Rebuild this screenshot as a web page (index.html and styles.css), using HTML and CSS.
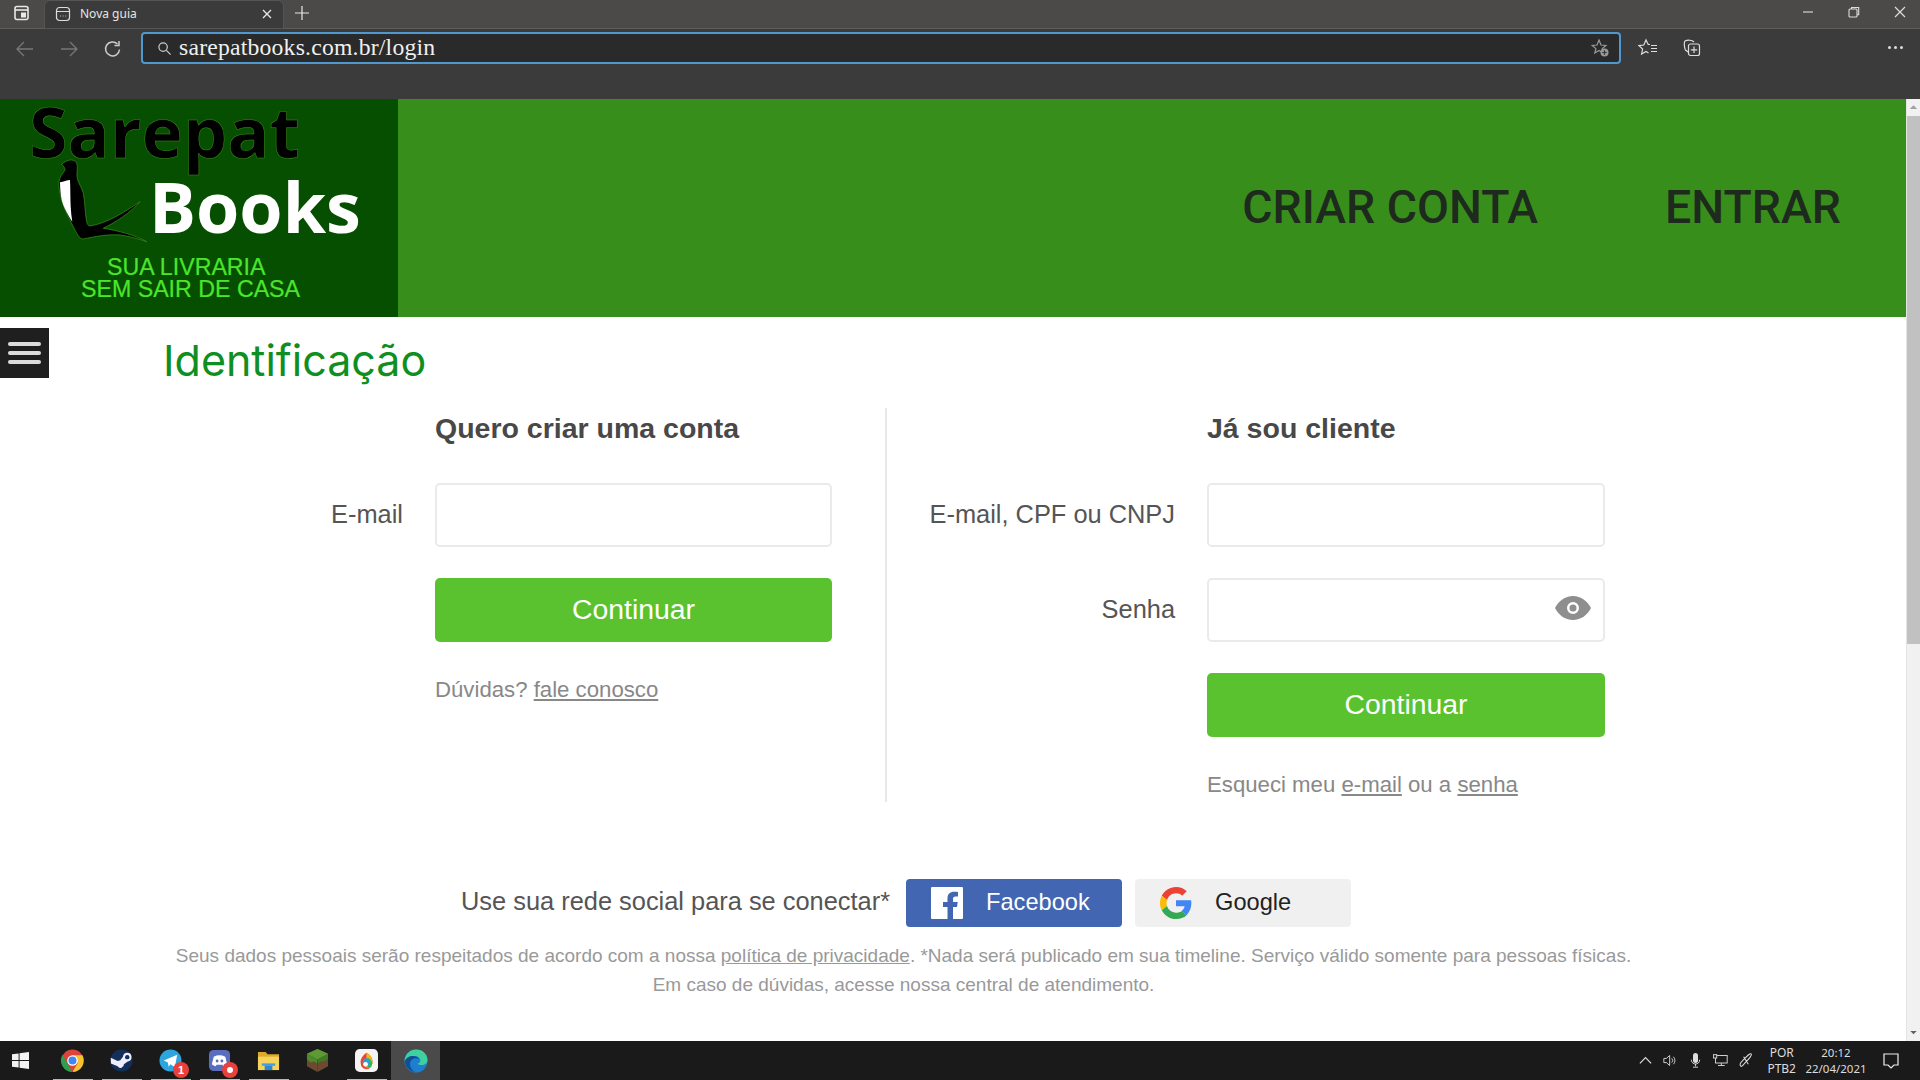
FILE: index.html
```html
<!DOCTYPE html>
<html lang="pt-BR">
<head>
<meta charset="utf-8">
<title>Sarepat Books</title>
<link rel="stylesheet" href="styles.css">
</head>
<body>
<div class="browser">
  <div class="tabstrip">
    <div class="tab-actions">
      <svg class="ic18" viewBox="0 0 18 18" fill="none" stroke="#e8e8e8" stroke-width="1.6"><rect x="2" y="2.500" width="13" height="13" rx="2"/><path d="M2 6h13"/><rect x="8" y="8.500" width="5" height="5" fill="#e8e8e8" stroke="none"/></svg>
    </div>
    <div class="tab">
      <svg class="ic18" viewBox="0 0 18 18" fill="none" stroke="#ddd" stroke-width="1.200"><rect x="2.500" y="2.500" width="13" height="13" rx="3"/><path d="M2.500 6.500h13M6 11h.8M8.700 11h.8M11.400 11h.8"/></svg>
      <span class="tab-title">Nova guia</span>
      <svg class="tab-x" viewBox="0 0 12 12" stroke="#e8e8e8" stroke-width="1.300"><path d="M2 2l8 8M10 2l-8 8"/></svg>
    </div>
    <svg class="tab-new" viewBox="0 0 16 16" stroke="#e8e8e8" stroke-width="1.200"><path d="M8 1v14M1 8h14"/></svg>
    <div class="win-controls">
      <svg viewBox="0 0 14 14" stroke="#ddd" stroke-width="1.100"><path d="M2 7h10"/></svg>
      <svg viewBox="0 0 14 14" fill="none" stroke="#ddd" stroke-width="1.100"><rect x="2" y="4" width="8" height="8" rx="1"/><path d="M4.500 4V2.500h7.200v7.200H10"/></svg>
      <svg viewBox="0 0 14 14" stroke="#ddd" stroke-width="1.200"><path d="M2 2l10 10M12 2L2 12"/></svg>
    </div>
  </div>
  <div class="toolbar">
    <div class="nav-icons">
      <svg viewBox="0 0 20 20" fill="none" stroke="#777" stroke-width="1.300"><path d="M18 10H2M9 3l-7 7 7 7"/></svg>
      <svg viewBox="0 0 20 20" fill="none" stroke="#777" stroke-width="1.300"><path d="M2 10h16M11 3l7 7-7 7"/></svg>
      <svg viewBox="0 0 20 20" fill="none" stroke="#ccc" stroke-width="1.500"><path d="M16.500 10.500a7 7 0 1 1-2-5.500"/><path d="M16 2v4.500h-4.500"/></svg>
    </div>
    <div class="omnibox">
      <svg class="omni-search" viewBox="0 0 16 16" fill="none" stroke="#ccc" stroke-width="1.300"><circle cx="6.500" cy="6.500" r="4.500"/><path d="M10 10l4.500 4.500"/></svg>
      <span class="omni-url">sarepatbooks.com.br/login</span>
      <svg class="omni-star" viewBox="0 0 20 20" fill="none" stroke="#999" stroke-width="1.200"><path d="M9 2l2 5 5 .4-3.800 3.200 1 4.400-4.200-2.500L4.800 15l1.100-4.400L2.200 7.400 7 7z"/><circle cx="14.500" cy="14.500" r="4" fill="#999" stroke="none"/><path d="M14.500 12.300v4.400M12.300 14.500h4.400" stroke="#333"/></svg>
    </div>
    <div class="tool-icons">
      <svg viewBox="0 0 20 20" fill="none" stroke="#ddd" stroke-width="1.200"><path d="M12 6.500H10.200L8 2 5.800 7 1 7.600 4.600 11l-1 5L8 13.500l2.500 1.500"/><path d="M13 7.500h6M13 10.500h6M13 13.500h6"/></svg>
      <svg viewBox="0 0 20 20" fill="none" stroke="#ddd" stroke-width="1.200"><path d="M12 4C10 1.800 5.500 1.800 3 3c-1 .8-1 6 .5 9l2.500 2"/><rect x="6.500" y="6" width="11" height="11.500" rx="2"/><path d="M12 8.500v6.500M8.800 11.800h6.400"/></svg>
    </div>
    <div class="tool-more"><span></span><span></span><span></span></div>
  </div>
</div>

<div class="viewport">
  <div class="page">
    <header class="site-header">
      <div class="logo">
        <div class="logo-sarepat">Sarepat</div>
        <div class="logo-mid">
          <svg class="logo-bird" viewBox="0 0 90 85"><path d="M3.700 5C7 2.500 10.500 .7 13.700 1c4 .5 5.600 3.500 5.600 6.700 0 4-.8 7.500 0 11.600 1 5 4.500 9 6 15 2 9 1.500 20 3.400 28.400.5 2.500 1.500 4.300 3.300 4.300C50 64 68 52 82 42.700 72 54 58 63 45.300 69.300 60 71.500 78 76.500 88.700 82.700 80 79.500 70 77 62 76c-12-1-25 1.500-36.700 4-4 0-7-6-10-12.300C10 58 4 45 2 34.300 1 30 .5 26 1 22.700 1.500 18 4.500 15 7 11 7.500 9 5 7 3.700 5z" fill="#000" stroke="#3c8f1c" stroke-width=".7"/><path d="M2 23.300c3.500-.8 7-2 10-2.300.5 9 .2 18 .7 26.700.2 5 .8 10 1.600 15C10 56 5.500 48 3.700 41 2.500 35 2 29 2 23.300z" fill="#fff"/></svg>
          <div class="logo-books">Books</div>
        </div>
        <div class="logo-tag logo-tag-1">SUA LIVRARIA</div>
        <div class="logo-tag logo-tag-2">SEM SAIR DE CASA</div>
      </div>
      <nav class="site-nav">
        <a class="nav-link">CRIAR CONTA</a>
        <a class="nav-link">ENTRAR</a>
      </nav>
    </header>

    <button class="menu-btn" aria-label="Menu"><span></span><span></span><span></span></button>

    <main class="content">
      <h1 class="page-title">Identificação</h1>
      <div class="panels">
        <section class="panel panel-new">
          <div></div><h2 class="panel-title">Quero criar uma conta</h2>
          <label class="field-label">E-mail</label><div class="input"></div>
          <div></div><button class="btn-primary">Continuar</button>
          <div></div><p class="hint">Dúvidas? <a>fale conosco</a></p>
        </section>
        <section class="panel panel-client">
          <div></div><h2 class="panel-title">Já sou cliente</h2>
          <label class="field-label">E-mail, CPF ou CNPJ</label><div class="input"></div>
          <label class="field-label">Senha</label>
          <div class="input input-pass">
            <svg class="eye" viewBox="0 0 36 24" fill="#8e8e8e"><path fill-rule="evenodd" d="M18 0C10 0 3.500 5 0 12c3.500 7 10 12 18 12s14.500-5 18-12C32.500 5 26 0 18 0zm0 6a6 6 0 1 1 0 12 6 6 0 0 1 0-12z"/><circle cx="18" cy="12" r="3.500"/></svg>
          </div>
          <div></div><button class="btn-primary">Continuar</button>
          <div></div><p class="hint">Esqueci meu <a>e-mail</a> ou a <a>senha</a></p>
        </section>
      </div>
      <div class="social">
        <span class="social-text">Use sua rede social para se conectar*</span>
        <button class="btn-social btn-fb">
          <svg class="fb-ic" viewBox="0 0 32 32"><path fill="#fff" d="M1 0h30a1 1 0 0 1 1 1v30a1 1 0 0 1-1 1h-9V20h4l.7-5H22v-3c0-1.500.7-2.500 2.500-2.500H27V5c-1-.2-2.500-.3-4-.3-4 0-6.500 2.300-6.500 6.500V15H12v5h4.500v12H1a1 1 0 0 1-1-1V1a1 1 0 0 1 1-1z"/></svg>
          <span class="btn-label">Facebook</span>
        </button>
        <button class="btn-social btn-g">
          <svg class="g-ic" viewBox="0 0 48 48"><path fill="#EA4335" d="M24 9.500c3.500 0 6.700 1.200 9.200 3.600l6.900-6.900C35.900 2.400 30.500 0 24 0 14.600 0 6.500 5.400 2.600 13.200l8 6.200C12.400 13.700 17.700 9.500 24 9.500z"/><path fill="#4285F4" d="M47 24.500c0-1.600-.1-3.100-.4-4.500H24v9h12.900c-.6 3-2.200 5.500-4.700 7.200l7.700 6C44.400 37.600 47 31.600 47 24.500z"/><path fill="#FBBC05" d="M10.500 28.600C10 27.200 9.800 25.600 9.800 24s.3-3.200.8-4.600l-8-6.200C1 16.400 0 20.100 0 24s.9 7.600 2.600 10.800l7.900-6.200z"/><path fill="#34A853" d="M24 48c6.500 0 11.900-2.100 15.900-5.800l-7.700-6c-2.200 1.400-4.900 2.300-8.200 2.300-6.300 0-11.600-4.200-13.500-9.900l-7.900 6.200C6.500 42.600 14.600 48 24 48z"/></svg>
          <span class="btn-label">Google</span>
        </button>
      </div>
      <p class="legal">Seus dados pessoais serão respeitados de acordo com a nossa <a>política de privacidade</a>. *Nada será publicado em sua timeline. Serviço válido somente para pessoas físicas.<br>Em caso de dúvidas, acesse nossa central de atendimento.</p>
    </main>
  </div>
  <div class="scrollbar">
    <svg class="sb-arrow" viewBox="0 0 14 17" fill="#a0a0a0"><path d="M3 10l4-4 4 4z"/></svg>
    <div class="sb-thumb"></div>
    <svg class="sb-arrow sb-down" viewBox="0 0 14 17" fill="#606060"><path d="M3.500 7l3.500 3.500L10.500 7z"/></svg>
  </div>
</div>

<footer class="taskbar">
  <svg class="win-logo" viewBox="0 0 18 18" fill="#f2f2f2"><path d="M0 2.500l7-1v7H0zM8 1.300l10-1.300v8.500H8zM0 9.500h7v7l-7-1zM8 9.500h10V18L8 16.700z"/></svg>
  <div class="task-apps">
    <div class="app app-running"><svg viewBox="0 0 24 24"><circle cx="12" cy="12" r="11.500" fill="#db4437"/><path d="M12 24A12 12 0 0 1 1.600 6l6 10.500z" fill="#2e9e4f"/><path d="M12 24l5.500-9.500L12 6.500h10.400A12 12 0 0 1 12 24z" fill="#f3c330"/><circle cx="12" cy="12" r="5.500" fill="#fff"/><circle cx="12" cy="12" r="4.200" fill="#4285f4"/></svg></div>
    <div class="app app-running"><svg viewBox="0 0 24 24"><circle cx="12" cy="12" r="11.500" fill="#12305a"/><path d="M1 15l7 3a3.500 3.500 0 0 0 6.500-2l4-3a4.500 4.500 0 1 0-5-5l-3 4a3.500 3.500 0 0 0-2.500.5L.8 9z" fill="#eef"/><circle cx="18" cy="8.500" r="2.300" fill="#12305a"/></svg></div>
    <div class="app app-running">
      <div class="app-badged">
        <svg viewBox="0 0 24 24"><circle cx="12" cy="12" r="11.500" fill="#2ca5e0"/><path d="M5 12l14-6-2.500 13-4.500-3-2 2.500-.7-4.500z" fill="#fff"/></svg>
        <span class="badge">1</span>
      </div>
    </div>
    <div class="app app-running">
      <div class="app-badged">
        <svg viewBox="0 0 24 24"><rect x="1" y="1" width="22" height="22" rx="5" fill="#5a6ec0"/><path d="M6 8c4-2 8-2 12 0l2 8c-2 1.500-3 2-4 2l-1-1.500H9L8 18c-1 0-2-.5-4-2z" fill="#fff"/><circle cx="9.500" cy="12.500" r="1.500" fill="#5a6ec0"/><circle cx="14.500" cy="12.500" r="1.500" fill="#5a6ec0"/></svg>
        <span class="badge badge-dot"></span>
      </div>
    </div>
    <div class="app app-running"><svg viewBox="0 0 24 24"><path d="M1 3h8l2 2.500h12V22H1z" fill="#e0a92a"/><path d="M1 8h22v14H1z" fill="#f5d35c"/><path d="M8 17h8v5H8z" fill="#2f86d6"/><path d="M5 15h14v2.500H5z" fill="#3fa0e8"/></svg></div>
    <div class="app"><svg viewBox="0 0 24 24"><path d="M12 0l11 5v13l-11 6-11-6V5z" fill="#6d4a2f"/><path d="M12 0l11 5-11 6L1 5z" fill="#5d9a35"/><path d="M1 5l11 6v4L8 13l-3 1-4-3z" fill="#4c8a2c"/><path d="M12 11l11-6v5l-4 3-3-.5-4 2.500z" fill="#3f7a26"/><path d="M12 11v13" stroke="#4a3220" stroke-width=".5"/></svg></div>
    <div class="app app-running"><svg viewBox="0 0 24 24"><rect x="0" y="0" width="24" height="24" rx="5" fill="#f4f4f4"/><path d="M12 4c5 3 7 7 6 11a6 6 0 0 1-12 0c-1-4 2-8 6-11z" fill="#e9442f"/><path d="M12 4c5 3 7 7 6 11a6 6 0 0 1-6 5z" fill="#f7b51c"/><path d="M13 9c3 1 5 4 5 6a6 6 0 0 1-5 5z" fill="#2fb84e"/><path d="M10 10c3-1 5 1 5 4s-2 4-3 4-4-2-4-4 1-3 2-4z" fill="#2c9be0"/><circle cx="11" cy="16" r="2.500" fill="#fff"/></svg></div>
    <div class="app app-active">
      <svg viewBox="0 0 24 24"><circle cx="12" cy="12" r="11.500" fill="#1e7fd0"/><path d="M.5 12C1 5 6 .5 12 .5c7 0 11.500 5 11.500 10.500 0 3-2.500 5-6 5-2 0-3.500-.5-3.500-1.500 2-1 3-2.500 2-4.500C14.500 7 10 6 6 8c-3 1.500-5 3-5.500 4z" fill="#3fd0a0"/><path d="M1 12c1-3 4-5 8-5 3 0 5 1 6 3-5-2-9 1-9 5 0 3.500 2 6.500 5 8C5 22 1 17.500 1 12z" fill="#114f92"/></svg>
    </div>
  </div>
  <div class="tray">
    <svg class="tray-ic" viewBox="0 0 16 16" fill="none" stroke="#ddd" stroke-width="1.300"><path d="M2 11l6-6 6 6"/></svg>
    <svg class="tray-ic" viewBox="0 0 18 16" fill="none" stroke="#ddd" stroke-width="1.100"><path d="M1 5.500h3L8 2v12l-4-3.500H1zM10.500 5.500a3.500 3.500 0 0 1 0 5M12.500 3.500a6.500 6.500 0 0 1 0 9"/></svg>
    <svg class="tray-ic" viewBox="0 0 16 18" fill="none"><rect x="5" y="0" width="6" height="12" rx="3" fill="#ddd"/><path d="M3 8c0 7 10 7 10 0M8 13v3M5 17h6" stroke="#ddd" stroke-width="1.100"/></svg>
    <svg class="tray-ic" viewBox="0 0 18 16" fill="none" stroke="#ddd" stroke-width="1.100"><rect x="3" y="2" width="14" height="9"/><path d="M10 11v3M6 14h8"/><rect x=".5" y="1" width="4" height="4" fill="#222"/></svg>
    <svg class="tray-ic" viewBox="0 0 16 16" fill="none" stroke="#ddd" stroke-width="1.100"><path d="M3 14c-2-2 0-4 4-8s6-6 7-5-1 4-5 8-5 6-6 5zM6 4l5 8"/></svg>
    <div class="tray-lang">POR<br>PTB2</div>
    <div class="tray-clock">20:12<br>22/04/2021</div>
    <svg class="tray-notify" viewBox="0 0 18 18" fill="none" stroke="#eee" stroke-width="1.200"><path d="M2 2h14v11h-4l-3 3-3-3H2z"/></svg>
  </div>
</footer>
</body>
</html>
```
FILE: styles.css
```css
* { box-sizing: border-box; }
html, body { margin: 0; height: 100%; overflow: hidden; }
body { display: flex; flex-direction: column; width: 1920px; height: 1080px; font-family: "Liberation Sans", Arial, sans-serif; background: #fff; }
svg { display: block; flex: none; }
p, h1, h2 { margin: 0; }
button { font-family: inherit; border: 0; padding: 0; }

/* browser chrome */
.browser { height: 99px; flex: none; background: #3b3b3b; }
.tabstrip { height: 29px; background: #4b4a48; display: flex; align-items: center; border-bottom: 1px solid #5d5d5b; padding-bottom: 2px; }
.tab-actions { width: 44px; height: 26px; display: flex; align-items: center; justify-content: center; }
.tab { width: 240px; height: 29px; background: #3b3b3b; display: flex; align-items: center; align-self: flex-start; padding: 0 11px 2px 10px; border-radius: 6px 6px 0 0; box-shadow: 0 0 0 1px #555 inset; }
.ic18 { width: 18px; height: 18px; }
.tab-title { color: #e6e6e6; font: 12px "Noto Sans", sans-serif; margin-left: 8px; flex: 1; }
.tab-x { width: 12px; height: 12px; }
.tab-new { width: 16px; height: 16px; margin-left: 10px; }
.win-controls { margin-left: auto; display: flex; gap: 32px; padding-right: 13px; }
.win-controls svg { width: 14px; height: 14px; margin-bottom: 3px; }
.toolbar { height: 41px; display: flex; align-items: flex-start; padding-top: 3px; }
.nav-icons { width: 141px; display: flex; gap: 24px; padding: 7px 0 0 15px; }
.nav-icons svg { width: 20px; height: 20px; }
.omnibox { width: 1480px; height: 32px; background: #2a2a2a; border: 2px solid #5099cf; border-radius: 4px; display: flex; align-items: center; padding-left: 14px; }
.omni-search { width: 15px; height: 15px; }
.omni-url { color: #f0f0f0; font: 23.700px/26px "Liberation Serif", serif; margin: 0 0 2px 7px; flex: 1; letter-spacing: .2px; }
.omni-star { width: 20px; height: 20px; margin-right: 9px; }
.tool-icons { display: flex; gap: 24px; padding: 6px 0 0 17px; }
.tool-icons svg { width: 20px; height: 20px; }
.tool-more { display: flex; gap: 3px; margin-left: auto; padding: 14px 17px 0 0; }
.tool-more span { width: 3px; height: 3px; border-radius: 50%; background: #ddd; }

/* viewport */
.viewport { flex: 1; display: flex; min-height: 0; }
.page { flex: 1; position: relative; min-width: 0; overflow: hidden; }
.scrollbar { width: 14px; background: #f1f1f1; border-left: 1px solid #e4e4e4; display: flex; flex-direction: column; }
.sb-arrow { width: 13px; height: 17px; }
.sb-thumb { height: 528px; background: #c1c1c1; }
.sb-down { margin-top: auto; }

/* site header */
.site-header { height: 218px; background: #388e1a; display: flex; }
.logo { width: 398px; background: #064e00; flex: none; overflow: hidden; }
.logo-sarepat { font: 700 70px/65px "Open Sans", sans-serif; height: 60px; color: #000; margin-left: 29px; -webkit-text-stroke: .5px #3c8f1c; }
.logo-mid { display: flex; height: 85px; }
.logo-bird { width: 90px; height: 85px; margin-left: 58px; }
.logo-books { font: 700 70px/60px "Open Sans", sans-serif; color: #fff; margin: 17px 0 0 1px; }
.logo-tag { font: 23.200px/22px "Liberation Sans", sans-serif; color: #4be52c; white-space: nowrap; -webkit-text-stroke: .2px #4be52c; }
.logo-tag-1 { margin: 12px 0 0 107px; }
.logo-tag-2 { margin-left: 81px; }
.site-nav { flex: 1; display: flex; justify-content: flex-end; align-items: center; gap: 127px; padding: 0 65px 2px 0; }
.nav-link { font: 500 46.400px "Roboto", sans-serif; color: #1e2a1e; }

.menu-btn { position: absolute; left: 0; top: 229px; width: 49px; height: 50px; background: #1f1f1f; display: flex; flex-direction: column; justify-content: center; align-items: center; gap: 5px; }
.menu-btn span { width: 33px; height: 4px; border-radius: 2px; background: #dcdcdc; }

/* content */
.content { padding-top: 12px; }
.page-title { font: 400 43px/62px "Inter", sans-serif; color: #0f8f22; margin-left: 163px; }
.panels { display: flex; margin-top: 17px; height: 394px; }
.panel { display: grid; grid-auto-rows: min-content; align-content: start; }
.panel-new { width: 887px; border-right: 2px solid #e8e8e8; grid-template-columns: 403px 397px; column-gap: 32px; }
.panel-client { grid-template-columns: 288px 398px; column-gap: 32px; }
.panel-title { font: 700 28.500px/40px "Liberation Sans", sans-serif; color: #484848; margin: 0 0 35px; }
.field-label { font-size: 25.400px; color: #555; text-align: right; align-self: center; margin-bottom: 32px; }
.input { height: 64px; border: 2px solid #eaeaea; border-radius: 5px; margin-bottom: 31px; display: flex; align-items: center; justify-content: flex-end; padding-right: 12px; background: #fff; }
.eye { width: 36px; height: 24px; margin-bottom: 5px; }
.btn-primary { height: 64px; background: #5ac22e; border-radius: 5px; color: #fff; font-size: 28.400px; margin-bottom: 31px; padding-bottom: 2px; }
.hint { font-size: 22.200px; color: #888; line-height: 28px; margin-top: 3px; }
.hint a, .legal a { text-decoration: underline; }

.social { display: flex; align-items: center; margin: 77px 0 0 461px; }
.social-text { font-size: 25.400px; color: #555; margin: 0 16px 4px 0; }
.btn-social { width: 216px; height: 48px; border-radius: 4px; display: flex; align-items: center; font-size: 23.600px; padding-left: 25px; gap: 23px; }
.btn-label { margin-bottom: 2px; }
.btn-fb { background: #4266b2; color: #fff; }
.fb-ic { width: 32px; height: 32px; }
.btn-g { background: #f0f0f0; color: #222; margin-left: 13px; }
.g-ic { width: 32px; height: 32px; }
.legal { font-size: 19px; line-height: 29px; color: #999; text-align: center; margin-top: 14px; width: 1807px; }

/* taskbar */
.taskbar { height: 39px; flex: none; background: #1a1a1a; display: flex; align-items: center; }
.win-logo { width: 17px; height: 17px; margin-left: 12px; }
.task-apps { display: flex; align-items: center; margin-left: 19px; height: 100%; }
.app { width: 49px; height: 100%; display: flex; align-items: center; justify-content: center; position: relative; }
.app svg { width: 23px; height: 23px; }
.app-running::after { content: ""; position: absolute; left: 5px; right: 4px; bottom: 0; height: 1px; background: #b8b8b8; }
.app-active { background: #4a4a4a; }
.app-active svg { width: 24px; height: 24px; }
.app-badged { position: relative; }
.badge { position: absolute; right: -7px; bottom: -6px; width: 16px; height: 16px; border-radius: 50%; background: #e8403a; color: #fff; font: 700 11px/16px "Liberation Sans", sans-serif; text-align: center; }
.badge-dot::after { content: ""; display: block; width: 6px; height: 6px; border-radius: 50%; background: #fff; margin: 5px; }
.tray { margin-left: auto; display: flex; align-items: center; height: 100%; color: #ddd; font: 12px/16px "Noto Sans", sans-serif; }
.tray-ic { width: 15px; height: 15px; margin-right: 10px; }
.tray-lang { margin: 0 8px 0 4px; text-align: center; }
.tray-clock { text-align: center; width: 64px; font-size: 11.500px; }
.tray-notify { width: 18px; height: 18px; margin: 0 20px 0 14px; }
```
